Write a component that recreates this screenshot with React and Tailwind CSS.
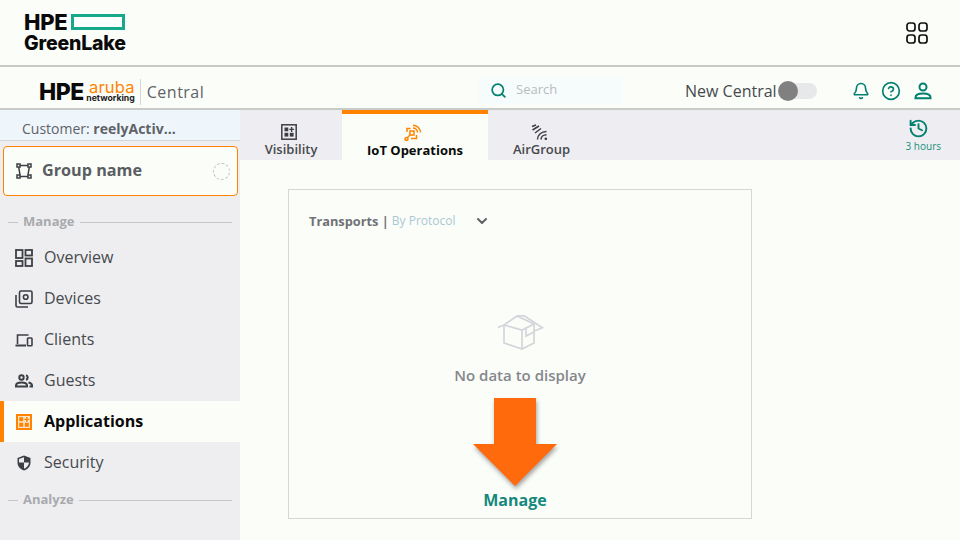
import { Search, Bell, CircleHelp, ChevronDown, History } from "lucide-react";

const navItems = [
  { label: "Overview", icon: <OverviewIcon /> },
  { label: "Devices", icon: <DevicesIcon /> },
  { label: "Clients", icon: <ClientsIcon /> },
  { label: "Guests", icon: <GuestsIcon /> },
  { label: "Applications", icon: <AppsIcon />, active: true },
  { label: "Security", icon: <ShieldIcon /> },
];

function OverviewIcon() {
  return (
    <svg width="18" height="18" viewBox="0 0 18 18" fill="none" stroke="#3c3f44" strokeWidth="1.8">
      <rect x="1" y="1" width="6.5" height="8" />
      <rect x="10.5" y="1" width="6.5" height="5.5" />
      <rect x="1" y="12" width="6.5" height="5" />
      <rect x="10.5" y="9.5" width="6.5" height="7.5" />
    </svg>
  );
}

function DevicesIcon() {
  return (
    <svg width="18" height="18" viewBox="0 0 18 18" fill="none" stroke="#3c3f44" strokeWidth="1.6">
      <rect x="4.5" y="1" width="12.5" height="12.5" rx="1.5" />
      <circle cx="10.7" cy="7" r="2.3" />
      <path d="M1 5v10.5c0 .8.7 1.5 1.5 1.5H13" />
    </svg>
  );
}

function ClientsIcon() {
  return (
    <svg width="18" height="16" viewBox="0 0 18 16" fill="none" stroke="#3c3f44" strokeWidth="1.6">
      <path d="M2.5 12V3h11" />
      <path d="M0.5 13.5H11" strokeWidth="2" />
      <rect x="12.5" y="6" width="4.5" height="7.8" rx="0.8" />
    </svg>
  );
}

function GuestsIcon() {
  return (
    <svg width="18" height="14" viewBox="0 0 18 14" fill="none" stroke="#3c3f44" strokeWidth="2">
      <circle cx="6.5" cy="3.5" r="2.2" />
      <path d="M1 12.5v-1c0-2 2.800-3 5.500-3s5.500 1 5.500 3v1z" />
      <path d="M11 1.200a2.400 2.400 0 0 1 0 4.600" />
      <path d="M13.500 8.500c2 .4 3.500 1.400 3.500 3v1h-2.500" />
    </svg>
  );
}

function AppsIcon() {
  return (
    <svg width="16" height="16" viewBox="0 0 16 16">
      <rect width="16" height="16" fill="#ff8300" />
      <rect x="2" y="2" width="12" height="12" fill="#fbe3c6" />
      <rect x="3.200" y="3.200" width="4" height="4" fill="#ff8300" />
      <path d="M10.800 3v5M8.400 5.400h4.800" stroke="#ff8300" strokeWidth="1.400" />
      <rect x="3.200" y="8.800" width="4" height="4" fill="#ff8300" />
      <rect x="8.800" y="8.800" width="4" height="4" fill="#ff8300" />
    </svg>
  );
}

function ShieldIcon() {
  return (
    <svg width="14" height="16" viewBox="0 0 14 16">
      <path d="M7 .5 13.500 3v4.500c0 3.800-2.700 6.900-6.500 8C3.200 14.400.5 11.300.5 7.500V3z" fill="#3c3f44" />
      <path d="M7 2.200v5.300h5C11.800 10.300 9.800 12.700 7 13.700V7.500H2V3.900z" fill="#eeeef0" />
    </svg>
  );
}

function GroupIcon() {
  return (
    <svg width="16" height="16" viewBox="0 0 16 16" fill="none" stroke="#3c3f44" strokeWidth="1.500">
      <rect x="1" y="1" width="3" height="3" />
      <rect x="12" y="1" width="3" height="3" />
      <rect x="1" y="12" width="3" height="3" />
      <rect x="12" y="12" width="3" height="3" />
      <path d="M4 2.500h8M4 13.500h8M2.700 4.200 4 11.800M13.300 4.200 12 11.800" />
    </svg>
  );
}

function VisibilityIcon() {
  return (
    <svg width="16" height="16" viewBox="0 0 16 16">
      <rect x="0.800" y="0.800" width="14.400" height="14.400" fill="none" stroke="#3c3f44" strokeWidth="1.500" />
      <rect x="3.500" y="3.500" width="3.800" height="3.800" fill="#3c3f44" />
      <path d="M10.600 3v5M8.300 5.400h4.800" stroke="#3c3f44" strokeWidth="1.400" />
      <rect x="3.500" y="8.800" width="3.800" height="3.800" fill="#3c3f44" />
      <rect x="8.800" y="8.800" width="3.800" height="3.800" fill="#3c3f44" />
    </svg>
  );
}

function IotIcon() {
  return (
    <svg width="18" height="18" viewBox="0 0 18 18" fill="none" stroke="#ff8300" strokeWidth="1.500">
      <path d="M9 1.200c3.800 0 7.300 3.200 7.600 7.300M9 4c2.300 0 4.400 1.900 4.600 4.500" />
      <path d="M3 8V4.500h3.500M12.500 11v3.500H7" />
      <rect x="6" y="7" width="4" height="4" />
      <path d="M6 11 3 14" />
      <circle cx="2.500" cy="15" r="1.500" />
    </svg>
  );
}

function AirGroupIcon() {
  return (
    <svg width="17" height="16" viewBox="0 0 17 16" fill="none" stroke="#3c3f44" strokeWidth="1.500">
      <path d="M1 2.500 5 1M1.500 6 8 2M4 9l6-4.500" />
      <path d="M6.500 15.500C6.500 11 10.500 7.500 15.500 7.500M10 15.500c0-2.600 2.400-4.700 5.500-4.700" />
      <circle cx="14.800" cy="14.800" r="1.300" fill="#3c3f44" stroke="none" />
    </svg>
  );
}

function BoxIcon() {
  return (
    <svg width="47" height="35" viewBox="0 0 47 35" fill="none" stroke="#d3d5da" strokeWidth="1.700">
      <path d="M7 10v18l18 6 12-6V10" />
      <path d="M7 10l18 5 12-6-17-8L7 10 .8 12.500" />
      <path d="M25 15v19" />
      <path d="M20 1l7-.3 18.500 12-9 3.500" />
      <path d="M29 13v8l8-4" />
    </svg>
  );
}

function AppGridIcon() {
  return (
    <svg width="22" height="22" viewBox="0 0 22 22" fill="none" stroke="#111" strokeWidth="1.700">
      <rect x="1" y="1" width="8" height="8" rx="2.500" />
      <rect x="13" y="1" width="8" height="8" rx="2.500" />
      <rect x="1" y="13" width="8" height="8" rx="2.500" />
      <rect x="13" y="13" width="8" height="8" rx="2.500" />
    </svg>
  );
}

function UserIcon() {
  return (
    <svg width="18" height="18" viewBox="0 0 18 18" fill="none" stroke="#01816f" strokeWidth="2">
      <circle cx="9" cy="5" r="3.500" />
      <path d="M1.500 15.500c0-2.500 3-4 7.500-4s7.500 1.500 7.500 4v.8h-15z" />
    </svg>
  );
}

const App = () => {
  return (
    <div className="w-[960px] h-[540px] overflow-hidden bg-[#fbfdf9] font-['Open_Sans',sans-serif] text-[#3c3f44]">
      <header className="h-[67px] border-b-2 border-[#c9cbc9] flex items-center justify-between pl-6 pr-[32px]">
        <div className="font-['Inter',sans-serif] font-extrabold text-[#0a0a0a] leading-none">
          <div className="flex items-center gap-[4px] h-[22px]">
            <span className="text-[22px] tracking-[-0.3px]">HPE</span>
            <span className="w-[54px] h-[16px] border-[3px] border-[#17a98a] bg-white"></span>
          </div>
          <div className="text-[19.500px] tracking-[-0.2px] mt-[1px]">GreenLake</div>
        </div>
        <AppGridIcon />
      </header>

      <div className="h-[43px] border-b-2 border-[#c9cbc9] flex items-center pt-[8px]">
        <div className="flex items-center ml-[39px] w-[440px]">
          <span className="font-['Inter',sans-serif] font-extrabold text-[23px] leading-[24px] text-[#0a0a0a] tracking-[-0.5px]">HPE</span>
          <div className="flex flex-col ml-[4px] items-end leading-none w-[47px]">
            <span className="font-['Inter',sans-serif] text-[#ff8300] text-[16.500px] leading-[12px] tracking-[0.2px]">aruba</span>
            <span className="font-['Inter',sans-serif] font-bold text-[#1a1a1a] text-[8.700px] leading-[10px]">networking</span>
          </div>
          <span className="w-px h-[26px] bg-[#d5d7d7] ml-[5px]"></span>
          <span className="ml-[6px] text-[16px] tracking-[0.5px] text-[#5f6266]">Central</span>
        </div>
        <div className="flex items-center w-[144px] h-[28px] bg-[#f6fbfc] pl-[11px] gap-[9px] -mt-[3px]">
          <Search size={17} strokeWidth={2.400} className="text-[#01816f]" />
          <span className="text-[13px] text-[#b9bcbf]">Search</span>
        </div>
        <div className="flex items-center ml-[62px] -mt-[1px]">
          <span className="text-[16px] text-[#46494d]">New Central</span>
          <div className="relative w-[38px] h-[16px] ml-[2px] bg-[#e6e8ea] rounded-full">
            <span className="absolute -left-[1px] -top-[2px] w-[20px] h-[20px] rounded-full bg-[#808080]"></span>
          </div>
        </div>
        <div className="flex items-center ml-[35px] text-[#01816f] -mt-[2px]">
          <Bell size={18} strokeWidth={2.200} />
          <CircleHelp size={20} strokeWidth={2} className="ml-[11px]" />
          <span className="ml-[13px]"><UserIcon /></span>
        </div>
      </div>

      <div className="flex h-[430px]">
        <aside className="w-[240px] shrink-0 bg-[#eeeef0] flex flex-col">
          <div className="h-[31px] bg-[#eef6fc] border-b border-[#d2d6da] pl-[22px] pt-[6px] flex items-center text-[14px] text-[#5f6266]">
            Customer:&nbsp;<b className="font-bold">reelyActiv...</b>
          </div>
          <div className="ml-[3px] mt-[5px] w-[235px] h-[50px] bg-[#fbfdf9] border border-[#ff8300] rounded-[4px] flex items-center pl-[12px] pr-[7px]">
            <GroupIcon />
            <span className="ml-[10px] pb-[2px] text-[16.200px] font-bold text-[#5a5d61] flex-1">Group name</span>
            <span className="w-[17px] h-[17px] rounded-full border border-dashed border-[#bdbfc2]"></span>
          </div>
          <div className="flex items-center mt-[16px] pl-[8px] pr-[8px] gap-[5px] h-[20px]">
            <span className="w-[10px] h-px bg-[#c4c6cc]"></span>
            <span className="text-[13px] font-bold text-[#a8aaae]">Manage</span>
            <span className="flex-1 h-px bg-[#c4c6cc]"></span>
          </div>
          <nav className="mt-[5px] flex flex-col">
            {navItems.map((item) => (
              <div
                key={item.label}
                className={`h-[41px] flex items-center text-[16px] border-l-[4px] pl-[11px] ${item.active ? "bg-[#fbfdf9] border-[#ff8300] font-bold text-[#0a0a0a]" : "border-transparent text-[#46494d]"}`}
              >
                <span className="w-[18px] flex justify-center">{item.icon}</span>
                <span className="ml-[11px] pb-[2px]">{item.label}</span>
              </div>
            ))}
          </nav>
          <div className="flex items-center mt-[7px] pl-[8px] pr-[8px] gap-[5px] h-[20px]">
            <span className="w-[10px] h-px bg-[#c4c6cc]"></span>
            <span className="text-[13px] font-bold text-[#a8aaae]">Analyze</span>
            <span className="flex-1 h-px bg-[#c4c6cc]"></span>
          </div>
        </aside>

        <main className="flex-1 flex flex-col">
          <div className="h-[50px] bg-[#eeedf1] flex shrink-0">
            <div className="w-[102px] flex flex-col items-center pt-[14px] text-[13px] font-semibold text-[#46494d]">
              <span className="-ml-[5px]"><VisibilityIcon /></span>
              <span className="leading-[18px]">Visibility</span>
            </div>
            <div className="w-[146px] bg-[#fbfdf9] border-t-[4px] border-[#ff8300] flex flex-col items-center pt-[10px] text-[13px] font-bold text-[#0a0a0a]">
              <span className="-ml-[5px] h-[18px]"><IotIcon /></span>
              <span className="leading-[18px] -mt-[1px]">IoT Operations</span>
            </div>
            <div className="w-[107px] flex flex-col items-center pt-[14px] text-[13px] font-semibold text-[#46494d]">
              <span className="-ml-[5px]"><AirGroupIcon /></span>
              <span className="leading-[18px]">AirGroup</span>
            </div>
            <div className="ml-auto mr-[19px] flex flex-col items-center pt-[8px] text-[#17907f]">
              <History size={21} strokeWidth={2.200} className="text-[#01816f] -ml-[10px]" />
              <span className="text-[10px] leading-[14px]">3 hours</span>
            </div>
          </div>

          <div className="relative ml-[48px] mt-[29px] w-[464px] h-[330px] border border-[#d5d8d8] flex flex-col">
            <div className="flex items-center pl-[20px] pt-[22px] text-[12.800px] leading-[18px]">
              <span className="font-bold text-[#6f7276]">Transports |</span>
              <span className="ml-[3px] text-[12px] text-[#a9c8d4]">By Protocol</span>
              <ChevronDown size={16} strokeWidth={3} className="ml-[18px] text-[#5f6266]" />
            </div>
            <div className="flex flex-col items-center mt-[85px]">
              <BoxIcon />
              <span className="mt-[15px] text-[15px] font-semibold text-[#85878c] leading-[20px]">No data to display</span>
              <span className="mt-[104px] -ml-[10px] text-[16px] font-bold text-[#14897c] leading-[22px]">Manage</span>
            </div>
            <svg className="absolute left-[182px] top-[207px] drop-shadow-[1px_3px_2px_rgba(0,0,0,0.35)]" width="88" height="92" viewBox="0 0 88 92">
              <path d="M23 1h42v46h21L44 89 2 47h21z" fill="#ff6a0d" />
            </svg>
          </div>
        </main>
      </div>
    </div>
  );
};

export default App;
